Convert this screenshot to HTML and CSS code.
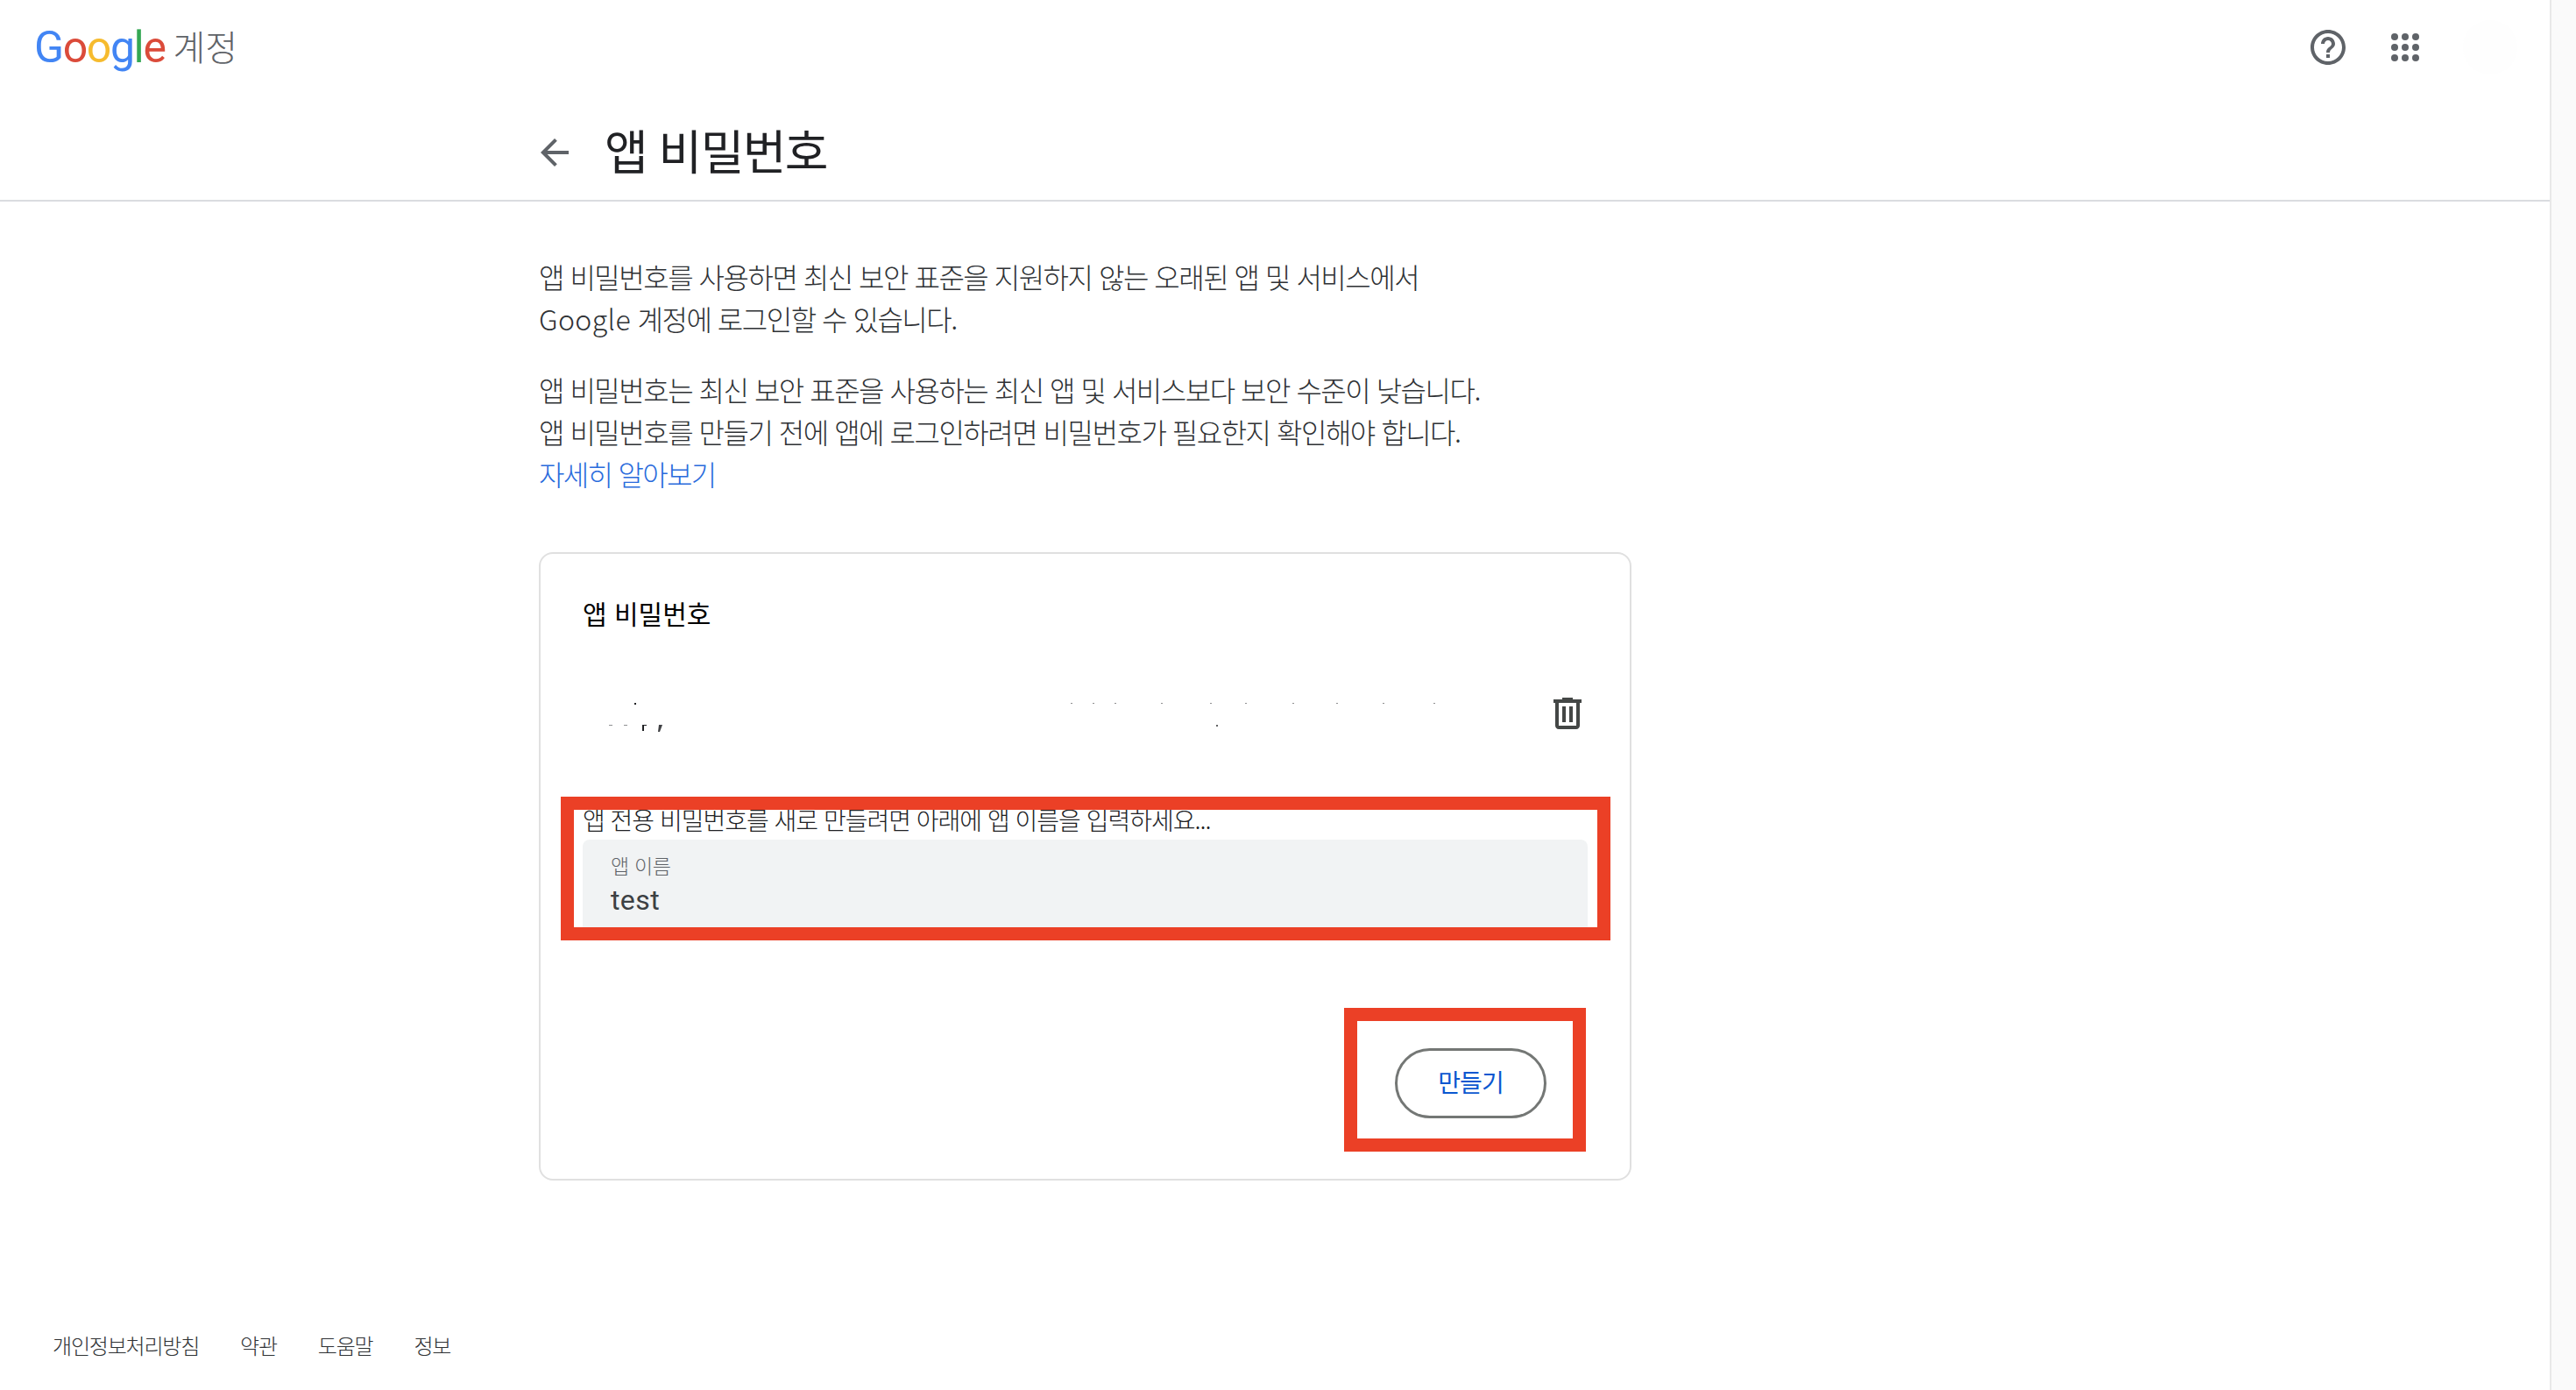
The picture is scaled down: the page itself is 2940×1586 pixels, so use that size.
FILE: index.html
```html
<!DOCTYPE html>
<html lang="ko">
<head>
<meta charset="utf-8">
<title>앱 비밀번호</title>
<link rel="stylesheet" href="styles.css">
</head>
<body>
<div class="page">
  <main class="main">
    <header class="header">
      <div class="topbar">
        <a class="brand">
          <span class="logo"><span class="c-blue">G</span><span class="c-red">o</span><span class="c-yellow">o</span><span class="c-blue">g</span><span class="c-green">l</span><span class="c-red">e</span></span>
          <span class="brand-name">계정</span>
        </a>
        <div class="top-actions">
          <svg class="icon" viewBox="0 0 24 24"><path d="M11 18h2v-2h-2v2zm1-16C6.48 2 2 6.48 2 12s4.48 10 10 10 10-4.48 10-10S17.52 2 12 2zm0 18c-4.41 0-8-3.59-8-8s3.59-8 8-8 8 3.59 8 8-3.59 8-8 8zm0-14c-2.21 0-4 1.79-4 4h2c0-1.1.9-2 2-2s2 .9 2 2c0 2-3 1.75-3 5h2c0-2.25 3-2.5 3-5 0-2.21-1.79-4-4-4z"/></svg>
          <svg class="icon" viewBox="0 0 24 24"><circle cx="6" cy="6" r="2"/><circle cx="12" cy="6" r="2"/><circle cx="18" cy="6" r="2"/><circle cx="6" cy="12" r="2"/><circle cx="12" cy="12" r="2"/><circle cx="18" cy="12" r="2"/><circle cx="6" cy="18" r="2"/><circle cx="12" cy="18" r="2"/><circle cx="18" cy="18" r="2"/></svg>
          <span class="avatar"></span>
        </div>
      </div>
      <div class="title-row">
        <svg class="icon" viewBox="0 0 24 24"><path d="M20 11H7.83l5.59-5.59L12 4l-8 8 8 8 1.41-1.41L7.83 13H20v-2z"/></svg>
        <h1 class="title">앱 비밀번호</h1>
      </div>
    </header>

    <section class="content">
      <p class="intro">앱 비밀번호를 사용하면 최신 보안 표준을 지원하지 않는 오래된 앱 및 서비스에서<br><span class="latin">Google</span> 계정에 로그인할 수 있습니다.</p>
      <p class="intro intro-second">앱 비밀번호는 최신 보안 표준을 사용하는 최신 앱 및 서비스보다 보안 수준이 낮습니다.<br>앱 비밀번호를 만들기 전에 앱에 로그인하려면 비밀번호가 필요한지 확인해야 합니다.<br><a class="link">자세히 알아보기</a></p>

      <div class="card">
        <h2 class="card-title">앱 비밀번호</h2>
        <div class="pw-row">
          <svg class="specks" viewBox="0 0 1099 90" width="1099" height="90">
            <rect x="59" y="33" width="2" height="2"/>
            <rect x="557" y="33" width="2" height="1" opacity=".5"/><rect x="582" y="33" width="2" height="1" opacity=".5"/><rect x="607" y="33" width="2" height="1" opacity=".5"/><rect x="660" y="33" width="2" height="1" opacity=".5"/><rect x="716" y="33" width="2" height="1" opacity=".5"/><rect x="756" y="33" width="2" height="1" opacity=".5"/><rect x="810" y="33" width="2" height="1" opacity=".5"/><rect x="860" y="33" width="2" height="1" opacity=".5"/><rect x="913" y="33" width="2" height="1" opacity=".5"/><rect x="971" y="33" width="2" height="1" opacity=".5"/>
            <rect x="30" y="58" width="4" height="1" opacity=".5"/><rect x="47" y="58" width="4" height="1" opacity=".5"/><rect x="68" y="58" width="2" height="7"/><rect x="70" y="58" width="3" height="1"/><path d="M87 58h4l-3 8h-2z" opacity=".85"/>
            <rect x="723" y="58" width="2" height="2" opacity=".7"/>
          </svg>
          <svg class="icon" viewBox="0 0 24 24"><path class="trash" d="M15 4V3H9v1H4v2h1v13c0 1.1.9 2 2 2h10c1.1 0 2-.9 2-2V6h1V4h-5zm2 15H7V6h10v13zM9 8h2v9H9zm4 0h2v9h-2z"/></svg>
        </div>
        <p class="helper">앱 전용 비밀번호를 새로 만들려면 아래에 앱 이름을 입력하세요...</p>
        <div class="field">
          <span class="field-label">앱 이름</span>
          <span class="field-value">test</span>
        </div>
        <div class="actions">
          <button class="create" type="button">만들기</button>
        </div>
        <div class="mark mark-field"></div>
        <div class="mark mark-button"></div>
      </div>
    </section>

    <footer class="footer">
      <a>개인정보처리방침</a>
      <a>약관</a>
      <a>도움말</a>
      <a>정보</a>
    </footer>
  </main>
  <div class="scrollbar"></div>
</div>
</body>
</html>
```
FILE: styles.css
```css
* { box-sizing: border-box; }
html, body { margin: 0; padding: 0; height: 100%; background: #fff; }
body {
  font-family: "Noto Sans CJK KR", "Roboto", sans-serif;
  color: #3c4043;
  overflow: hidden;
}
.page { display: flex; height: 1586px; }
.main { flex: 1; min-width: 0; display: flex; flex-direction: column; }
.scrollbar { width: 30px; background: #fafafa; border-left: 2px solid #e8e8e8; }

.icon { width: 48px; height: 48px; flex: none; fill: #5f6368; display: block; }
.trash { fill: #444746; }

.header { height: 230px; border-bottom: 2px solid #dadce0; }
.topbar { height: 108px; display: flex; align-items: center; padding: 0 37px 0 39px; }
.brand { display: flex; align-items: center; gap: 9px; }
.logo { font-family: "Roboto", sans-serif; font-size: 50px; font-weight: 400; line-height: 60px; letter-spacing: -1.4px; }
.c-blue { color: #4285f4; }
.c-red { color: #db4b3a; }
.c-yellow { color: #f6bb2e; }
.c-green { color: #34a853; }
.brand-name { font-size: 40px; line-height: 60px; color: #5f6368; margin-top: -4px; letter-spacing: 0; font-weight: 300; }
.top-actions { margin-left: auto; display: flex; align-items: center; gap: 40px; }
.avatar { width: 62px; height: 62px; border-radius: 50%; background: #fefefe; margin-left: 2px; }

.title-row { display: flex; align-items: center; gap: 33px; padding: 12px 0 0 609px; height: 120px; }
.title { margin: -6px 0 0; font-size: 54px; font-weight: 400; line-height: 70px; color: #202124; letter-spacing: -1.6px; }

.content { padding: 61px 0 0 615px; width: 1862px; }
.intro { margin: 0; font-size: 32px; line-height: 48px; color: #2f3235; letter-spacing: -1.5px; font-weight: 300; }
.latin { letter-spacing: .4px; }
.intro-second { margin-top: 33px; }
.link { color: #2a6bdc; letter-spacing: -1.7px; }

.card {
  position: relative;
  margin-top: 66px;
  width: 1247px;
  height: 717px;
  border: 2px solid #e0e0e0;
  border-radius: 16px;
  padding: 47px 48px 0 48px;
}
.card-title { margin: 0; font-size: 30px; font-weight: 400; line-height: 40px; color: #000; }
.pw-row { margin-top: 50px; height: 90px; display: flex; align-items: center; justify-content: space-between; }
.specks { flex: none; fill: #202124; }
.pw-row .icon { margin-right: -1px; }
.helper { margin: 58px 0 0; font-size: 28px; line-height: 36px; color: #202124; letter-spacing: -1px; font-weight: 300; }
.field {
  margin-top: 5px;
  height: 100px;
  background: #f1f3f4;
  border-radius: 8px 8px 0 0;
  padding: 13px 32px 0;
  display: flex;
  flex-direction: column;
}
.field-label { font-size: 23px; line-height: 32px; color: #5f6368; letter-spacing: -.3px; font-weight: 300; }
.field-value { font-family: "Roboto", sans-serif; font-size: 32px; line-height: 44px; margin-top: 2px; color: #3c4043; letter-spacing: .4px; }
.actions { margin-top: 138px; display: flex; justify-content: flex-end; padding-right: 47px; }
.create {
  width: 173px;
  height: 80px;
  border: 3px solid #747775;
  border-radius: 40px;
  background: #fff;
  color: #0b57d0;
  font-family: inherit;
  font-size: 28px;
  font-weight: 400;
  padding: 0 0 5px;
  letter-spacing: -1px;
}

.mark { position: absolute; border: 15px solid #eb4026; pointer-events: none; }
.mark-field { left: 23px; top: 277px; width: 1198px; height: 164px; }
.mark-button { left: 917px; top: 518px; width: 276px; height: 164px; }

.footer { margin-top: auto; display: flex; gap: 47px; padding: 0 0 33px 60px; font-size: 24px; font-weight: 300; line-height: 36px; color: #2f3235; letter-spacing: -1.2px; }
```
